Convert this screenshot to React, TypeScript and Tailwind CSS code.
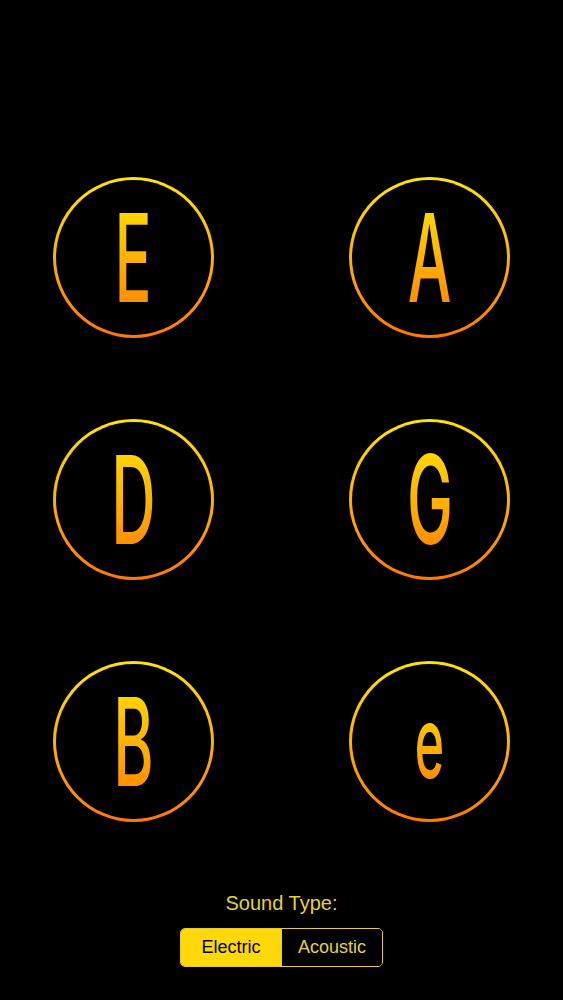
import React from "react";

const NOTES = ["E", "A", "D", "G", "B", "e"];

function NoteButton({ note }: { note: string }) {
  const lower = note === note.toLowerCase();
  return (
    <button className="w-[161px] h-[161px] rounded-full p-[3px] bg-gradient-to-b from-[#ffe600] to-[#ff7800]">
      <span className="flex w-full h-full rounded-full bg-black items-center justify-center">
        <span
          className={
            "inline-block leading-none font-[Inter,sans-serif] font-medium scale-x-[0.5] bg-gradient-to-b from-[#ffe000] to-[#ff8200] bg-clip-text text-transparent " +
            (lower ? "text-[100px]" : "text-[123px]")
          }
        >
          {note}
        </span>
      </span>
    </button>
  );
}

export default function App() {
  const [sound, setSound] = React.useState<"electric" | "acoustic">("electric");

  return (
    <div className="w-full h-[1000px] bg-black flex flex-col items-center font-['Liberation_Sans',Arial,sans-serif]">
      <div className="mt-[177px] w-full px-[53px] grid grid-cols-2 gap-y-[81px]">
        {NOTES.map((n, i) => (
          <div key={n} className={i % 2 === 0 ? "flex justify-start" : "flex justify-end"}>
            <NoteButton note={n} />
          </div>
        ))}
      </div>

      <p className="mt-[67px] text-[20px] leading-[28px] text-[#e8d236]">Sound Type:</p>
      <div className="mt-[11px] flex w-[203px] h-[39px] rounded-[5px] border border-[#e8cc2a] overflow-hidden text-[18px]">
        <button
          onClick={() => setSound("electric")}
          className={
            "flex-1 " +
            (sound === "electric" ? "bg-[#ffd80a] text-black" : "bg-black text-[#e8d236]")
          }
        >
          Electric
        </button>
        <button
          onClick={() => setSound("acoustic")}
          className={
            "flex-1 border-l border-[#e8cc2a] " +
            (sound === "acoustic" ? "bg-[#ffd80a] text-black" : "bg-black text-[#e8d236]")
          }
        >
          Acoustic
        </button>
      </div>
    </div>
  );
}
